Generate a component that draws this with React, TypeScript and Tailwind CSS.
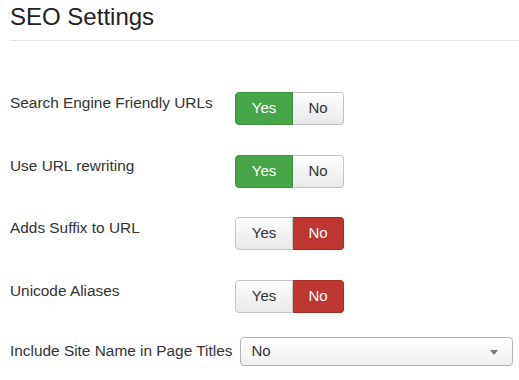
import React from "react";

const rows = [
  { label: "Search Engine Friendly URLs", value: true },
  { label: "Use URL rewriting", value: true },
  { label: "Adds Suffix to URL", value: false },
  { label: "Unicode Aliases", value: false },
];

function YesNo({ value }: { value: boolean }) {
  return (
    <div className="flex h-[33px] text-[15px]">
      <span
        className={
          value
            ? "flex w-[58px] items-center justify-center rounded-l-[4px] border border-[#3d8f3d] bg-[#46a546] text-white"
            : "flex w-[58px] items-center justify-center rounded-l-[4px] border border-[#c4c4c4] bg-gradient-to-b from-white to-[#e8e8e8] text-[#333]"
        }
      >
        Yes
      </span>
      <span
        className={
          value
            ? "flex w-[51px] items-center justify-center rounded-r-[4px] border border-l-0 border-[#c4c4c4] bg-gradient-to-b from-white to-[#e8e8e8] text-[#333]"
            : "flex w-[51px] items-center justify-center rounded-r-[4px] border border-l-0 border-[#a52d26] bg-[#bd362f] text-white"
        }
      >
        No
      </span>
    </div>
  );
}

export default function App() {
  return (
    <div className="h-[380px] w-[519px] bg-white pl-[10px] font-['Liberation_Sans',Arial,sans-serif] text-[#333]">
      <h2 className="border-b border-[#e5e5e5] pb-[8px] pt-[2px] text-[24px] leading-[30px] font-normal text-[#222]">
        SEO Settings
      </h2>

      <div className="pt-[51px]">
        {rows.map((row) => (
          <div key={row.label} className="mb-[29.5px] flex">
            <label className="w-[225px] pt-[1px] text-[15.4px] leading-[20px]">{row.label}</label>
            <YesNo value={row.value} />
          </div>
        ))}

        <div className="-mt-[5.5px] flex items-center">
          <label className="text-[15.4px] leading-[20px]">Include Site Name in Page Titles</label>
          <div className="relative ml-[8px] flex h-[29px] w-[273px] items-center rounded-[4px] border border-[#b4b4b4] bg-gradient-to-b from-white to-[#f0f0f0] pl-[10px] text-[15px]">
            No
            <span className="absolute right-[14px] top-[12px] h-0 w-0 border-x-[4px] border-t-[5px] border-x-transparent border-t-[#777]" />
          </div>
        </div>
      </div>
    </div>
  );
}
